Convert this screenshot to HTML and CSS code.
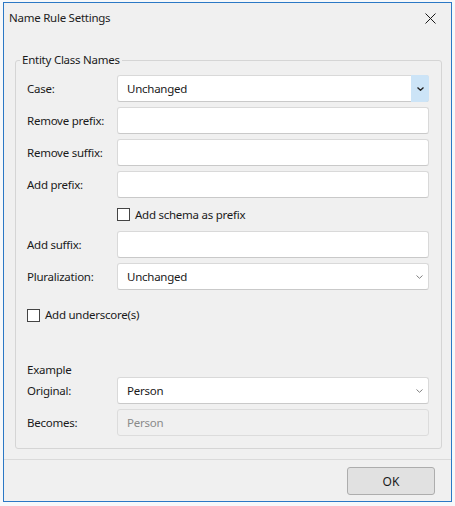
FILE: index.html
```html
<!DOCTYPE html>
<html>
<head>
<meta charset="utf-8">
<link rel="stylesheet" href="styles.css">
</head>
<body>
<div class="window">
  <div class="titlebar">
    <span class="title">Name Rule Settings</span>
    <span class="close">
      <svg width="11" height="11" viewBox="0 0 11 11"><path d="M0.5 0.5 L10.5 10.5 M10.5 0.5 L0.5 10.5" stroke="#1a1a1a" stroke-width="1" fill="none"/></svg>
    </span>
  </div>
  <div class="content">
    <fieldset class="group">
      <legend class="legend">Entity Class Names</legend>
      <div class="row">
        <span class="label">Case:</span>
        <div class="field combo focused">
          <span class="value">Unchanged</span>
          <span class="dropbtn active">
            <svg width="7" height="4" viewBox="0 0 7 4"><path d="M0.5 0.5 L3.5 3.3 L6.5 0.5" stroke="#222" stroke-width="1.3" fill="none"/></svg>
          </span>
        </div>
      </div>
      <div class="row">
        <span class="label">Remove prefix:</span>
        <div class="field"></div>
      </div>
      <div class="row">
        <span class="label">Remove suffix:</span>
        <div class="field"></div>
      </div>
      <div class="row">
        <span class="label">Add prefix:</span>
        <div class="field"></div>
      </div>
      <div class="row check-row indent">
        <span class="checkbox"></span>
        <span class="check-label">Add schema as prefix</span>
      </div>
      <div class="row">
        <span class="label">Add suffix:</span>
        <div class="field"></div>
      </div>
      <div class="row">
        <span class="label">Pluralization:</span>
        <div class="field combo">
          <span class="value">Unchanged</span>
          <span class="dropbtn">
            <svg width="7" height="4" viewBox="0 0 7 4"><path d="M0.5 0.5 L3.5 3.3 L6.5 0.5" stroke="#808080" stroke-width="1" fill="none"/></svg>
          </span>
        </div>
      </div>
      <div class="row check-row underscore">
        <span class="checkbox"></span>
        <span class="check-label">Add underscore(s)</span>
      </div>
      <div class="example-title">Example</div>
      <div class="row">
        <span class="label">Original:</span>
        <div class="field combo">
          <span class="value">Person</span>
          <span class="dropbtn">
            <svg width="7" height="4" viewBox="0 0 7 4"><path d="M0.5 0.5 L3.5 3.3 L6.5 0.5" stroke="#808080" stroke-width="1" fill="none"/></svg>
          </span>
        </div>
      </div>
      <div class="row">
        <span class="label">Becomes:</span>
        <div class="field disabled"><span class="value">Person</span></div>
      </div>
    </fieldset>
  </div>
  <div class="footer">
    <button class="ok">OK</button>
  </div>
</div>
</body>
</html>
```
FILE: styles.css
```css
* { box-sizing: border-box; }
html, body { margin: 0; padding: 0; }
body {
  background: #f6f8fa;
  font-family: "Noto Sans", "Open Sans", sans-serif;
  font-size: 11.5px;
  letter-spacing: -0.25px;
  color: #1a1a1a;
  width: 455px;
  height: 506px;
  overflow: hidden;
}
.window {
  margin: 2px 0 0 3px;
  width: 449px;
  height: 500px;
  border: 1px solid #2b78c5;
  background: #f0f0f0;
  display: flex;
  flex-direction: column;
}
.titlebar {
  height: 30px;
  display: flex;
  align-items: center;
  justify-content: space-between;
  padding: 0 15px 0 5px;
}
.title {
  color: #222;
  line-height: 16px;
}
.close {
  display: flex;
  width: 11px;
  height: 11px;
}
.content {
  padding: 19px 9px 0 11px;
}
.group {
  margin: 0;
  border: 1px solid #d5d5d5;
  border-radius: 3px;
  padding: 7px 12px 12px 11px;
  display: flex;
  flex-direction: column;
}
.legend {
  padding: 0 2px;
  margin-left: -7px;
  line-height: 16px;
}
.row {
  display: flex;
  align-items: center;
  margin-bottom: 5px;
}
.label {
  width: 90px;
  flex: none;
  line-height: 16px;
}
.field {
  flex: 1;
  height: 27px;
  background: #fff;
  border: 1px solid #d9d9d9;
  border-bottom-color: #c9c9c9;
  border-radius: 3px;
  display: flex;
  align-items: center;
  padding-left: 9px;
  position: relative;
}
.value {
  flex: 1;
  line-height: 16px;
}
.combo { padding-right: 0; }
.dropbtn {
  width: 17px;
  align-self: stretch;
  display: flex;
  align-items: center;
  justify-content: center;
  margin-right: 0;
}
.dropbtn.active {
  background: #cce4f7;
  margin: -1px -1px -1px 0;
  border-radius: 0 3px 3px 0;
  width: 18px;
}
.disabled {
  background: #f0f0f0;
  border-color: #dcdcdc;
  color: #8a8a8a;
}
.check-row {
  height: 23px;
}
.indent { padding-left: 90px; }
.checkbox {
  width: 13px;
  height: 13px;
  border: 1px solid #444;
  background: #fff;
  flex: none;
  margin-right: 5px;
}
.check-label { line-height: 16px; }
.underscore {
  height: 14px;
  margin-top: 13px;
  margin-bottom: 0;
}
.example-title {
  margin-top: 40px;
  line-height: 16px;
  height: 15px;
}
.row:last-child { margin-bottom: 0; }
.footer {
  margin-top: 10px;
  border-top: 1px solid #dadada;
  flex: 1;
  display: flex;
  justify-content: flex-end;
  align-items: flex-start;
  padding: 7px 16px 0 0;
}
.ok {
  width: 88px;
  height: 28px;
  background: #e1e1e1;
  border: 1px solid #adadad;
  border-radius: 3px;
  font-family: inherit;
  font-size: 12px;
  color: #1a1a1a;
  padding: 0;
}
```
